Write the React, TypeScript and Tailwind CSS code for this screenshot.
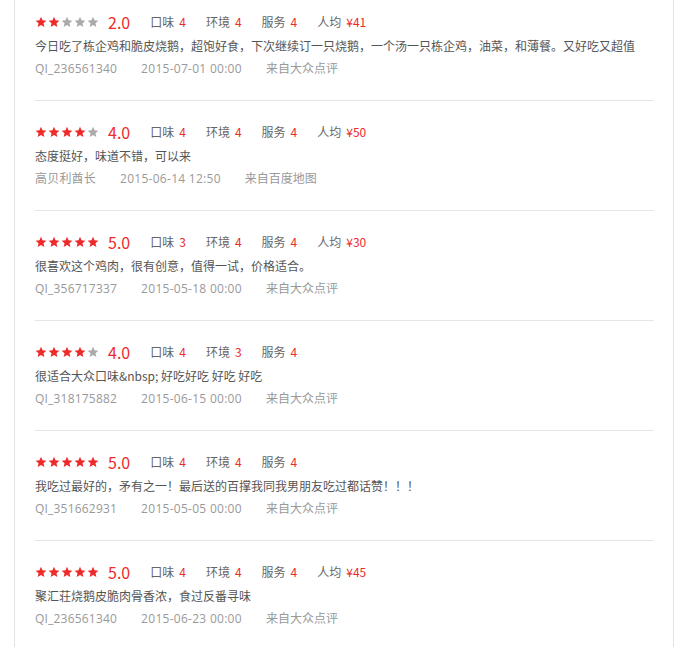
import React from "react";

type Review = {
  stars: number;
  score: string;
  taste: number;
  env: number;
  service: number;
  avg?: string;
  text: string;
  user: string;
  date: string;
  source: string;
};

const reviews: Review[] = [
  {
    stars: 2,
    score: "2.0",
    taste: 4,
    env: 4,
    service: 4,
    avg: "¥41",
    text: "今日吃了栋企鸡和脆皮烧鹅，超饱好食，下次继续订一只烧鹅，一个汤一只栋企鸡，油菜，和薄餐。又好吃又超值",
    user: "QI_236561340",
    date: "2015-07-01 00:00",
    source: "来自大众点评",
  },
  {
    stars: 4,
    score: "4.0",
    taste: 4,
    env: 4,
    service: 4,
    avg: "¥50",
    text: "态度挺好，味道不错，可以来",
    user: "高贝利酋长",
    date: "2015-06-14 12:50",
    source: "来自百度地图",
  },
  {
    stars: 5,
    score: "5.0",
    taste: 3,
    env: 4,
    service: 4,
    avg: "¥30",
    text: "很喜欢这个鸡肉，很有创意，值得一试，价格适合。",
    user: "QI_356717337",
    date: "2015-05-18 00:00",
    source: "来自大众点评",
  },
  {
    stars: 4,
    score: "4.0",
    taste: 4,
    env: 3,
    service: 4,
    text: "很适合大众口味&nbsp; 好吃好吃 好吃 好吃",
    user: "QI_318175882",
    date: "2015-06-15 00:00",
    source: "来自大众点评",
  },
  {
    stars: 5,
    score: "5.0",
    taste: 4,
    env: 4,
    service: 4,
    text: "我吃过最好的，矛有之一！最后送的百撑我同我男朋友吃过都话赞！！！",
    user: "QI_351662931",
    date: "2015-05-05 00:00",
    source: "来自大众点评",
  },
  {
    stars: 5,
    score: "5.0",
    taste: 4,
    env: 4,
    service: 4,
    avg: "¥45",
    text: "聚汇荘烧鹅皮脆肉骨香浓，食过反番寻味",
    user: "QI_236561340",
    date: "2015-06-23 00:00",
    source: "来自大众点评",
  },
];

function Star({ on }: { on: boolean }) {
  return (
    <svg width="12" height="12" viewBox="0 0 24 24" className="block">
      <path
        d="M12 1.5l3.09 7.1 7.71.7-5.84 5.1 1.74 7.6L12 18.1 5.3 22l1.74-7.6L1.2 9.3l7.71-.7z"
        fill={on ? "#ee2b2b" : "#aaaaaa"}
      />
    </svg>
  );
}

function Stat({ label, value }: { label: string; value: React.ReactNode }) {
  return (
    <span className="flex items-center mr-[20px]">
      <span className="text-[#666]">{label}</span>
      <span className="ml-[5px] text-[#ee2b2b]">{value}</span>
    </span>
  );
}

function ReviewItem({ r, first, last }: { r: Review; first: boolean; last: boolean }) {
  return (
    <div
      className={`${first ? "pt-[10px]" : "pt-[19px]"} pb-[22px] ${
        last ? "" : "border-b border-[#e6e6e6]"
      }`}
    >
      <div className="flex items-center h-[24px] text-[12px]">
        <div className="flex gap-[1px]">
          {[0, 1, 2, 3, 4].map((i) => (
            <Star key={i} on={i < r.stars} />
          ))}
        </div>
        <span className="ml-[9px] text-[16px] leading-[24px] text-[#ee2b2b] mr-[20px]">{r.score}</span>
        <Stat label="口味" value={r.taste} />
        <Stat label="环境" value={r.env} />
        <Stat label="服务" value={r.service} />
        {r.avg && <Stat label="人均" value={r.avg} />}
      </div>
      <div className="h-[24px] leading-[24px] text-[12px] text-[#555] whitespace-nowrap">{r.text}</div>
      <div
        className="flex items-start gap-[24px] h-[20px] leading-[22px] text-[12px] text-[#999]"
        style={{ fontFamily: '"Open Sans", "Noto Sans CJK SC", sans-serif' }}
      >
        <span className="tracking-[0.2px]">{r.user}</span>
        <span className="tracking-[0.28px]">{r.date}</span>
        <span>{r.source}</span>
      </div>
    </div>
  );
}

export default function App() {
  return (
    <div
      className="w-[688px] h-[647px] overflow-hidden bg-white"
      style={{ fontFamily: '"Noto Sans CJK SC", "Noto Sans", sans-serif' }}
    >
      <div className="ml-[14px] w-[660px] min-h-[647px] border-x border-[#e3e3e3] pl-[20px] pr-[19px]">
        {reviews.map((r, i) => (
          <ReviewItem key={i} r={r} first={i === 0} last={i === reviews.length - 1} />
        ))}
      </div>
    </div>
  );
}
